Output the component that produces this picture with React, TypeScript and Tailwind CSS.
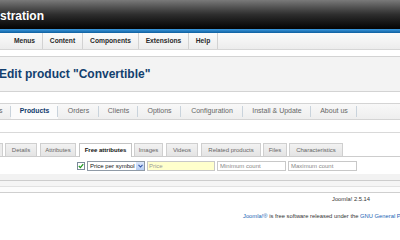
import React from "react";

const menu = [
  { t: "Menus", w: "w-[36px]" },
  { t: "Content", w: "w-[40px]" },
  { t: "Components", w: "w-[56px]" },
  { t: "Extensions", w: "w-[50px]" },
  { t: "Help", w: "w-[29px]" },
];

const sub = [
  { t: "Products", w: "w-[47px]", a: true },
  { t: "Orders", w: "w-[41px]" },
  { t: "Clients", w: "w-[39px]" },
  { t: "Options", w: "w-[43px]" },
  { t: "Configuration", w: "w-[62px]" },
  { t: "Install & Update", w: "w-[68px]" },
  { t: "About us", w: "w-[46px]" },
];

const tabs = [
  { t: "Details", c: "ml-[2px] w-[32px]" },
  { t: "Attributes", c: "ml-[3px] w-[36px]" },
  { t: "Free attributes", c: "ml-[3px] w-[53px]", a: true },
  { t: "Images", c: "ml-[2px] w-[29px]" },
  { t: "Videos", c: "ml-[3px] w-[32px]" },
  { t: "Related products", c: "ml-[3px] w-[60px]" },
  { t: "Files", c: "ml-[2px] w-[24px]" },
  { t: "Characteristics", c: "ml-[2px] w-[54px]" },
];

export default function App() {
  return (
    <div className="w-[400px] h-[240px] overflow-hidden bg-white font-['Liberation_Sans',Arial,sans-serif] flex flex-col">
      {/* header */}
      <div className="h-[29px] shrink-0 bg-gradient-to-b from-[#7a7a7a] via-[#2e2e2e] to-[#050505] flex items-center">
        <span className="text-white font-bold text-[12px] leading-none pt-[3px]">stration</span>
      </div>
      <div className="h-[4px] shrink-0 bg-gradient-to-b from-[#3c9be0] to-[#0e5f9f]" />
      {/* menu bar */}
      <div className="h-[17px] shrink-0 bg-gradient-to-b from-[#fbfbfb] to-[#ececec] border-b border-[#d6d6d6] flex items-stretch">
        <div className="w-[7px]" />
        {menu.map((m) => (
          <div
            key={m.t}
            className={`${m.w} shrink-0 border-r border-[#d2d2d2] flex items-center justify-center text-[6.7px] font-bold text-[#2a2a2a]`}
          >
            {m.t}
          </div>
        ))}
      </div>
      <div className="h-[6px] shrink-0" />
      {/* toolbar / title */}
      <div className="h-[36px] shrink-0 bg-[#f3f3f3] border-y border-[#d3d3d3] flex items-center">
        <h1 className="ml-[-1px] text-[12px] font-bold text-[#123f6e] leading-none pb-[1px]">
          Edit product "Convertible"
        </h1>
      </div>
      <div className="h-[11px] shrink-0" />
      {/* submenu */}
      <div className="h-[17px] shrink-0 bg-gradient-to-b from-[#f8f8f8] to-[#eeeeee] border-y border-[#d4d4d4] flex items-stretch text-[7px]">
        <div className="w-[11px] shrink-0 flex items-center text-[#666] relative">
          <span className="-ml-[1px]">s</span>
          <div className="absolute right-0 top-[2px] bottom-[2px] w-px bg-[#c9d3dc]" />
        </div>
        {sub.map((s) => (
          <div
            key={s.t}
            className={`${s.w} shrink-0 relative flex items-center justify-center ${
              s.a ? "font-bold text-[#0f3a6b] bg-[#fbfbfb] text-[6.8px]" : "text-[#666]"
            }`}
          >
            {s.t}
            <div className="absolute right-0 top-[2px] bottom-[2px] w-px bg-[#c9d3dc]" />
          </div>
        ))}
      </div>
      <div className="h-[12px] shrink-0" />
      {/* element box */}
      <div className="border-t border-[#d9d9d9] bg-white shrink-0">
        <div className="h-[10px]" />
        <div className="h-[14px] flex items-end border-b border-[#cdcdcd]">
          <div className="w-[4px] -ml-[1px] h-[13px] bg-[#ececec] border border-b-0 border-[#cfcfcf]" />
          {tabs.map((tb) => (
            <div
              key={tb.t}
              className={`${tb.c} shrink-0 flex items-center justify-center text-[6px] border border-b-0 ${
                tb.a
                  ? "h-[14px] -mb-[1px] bg-white border-[#c4c4c4] text-[#111] font-bold text-[5.8px]"
                  : "h-[13px] bg-gradient-to-b from-[#f2f2f2] to-[#e4e4e4] border-[#cfcfcf] text-[#666]"
              }`}
            >
              {tb.t}
            </div>
          ))}
        </div>
        {/* inputs row */}
        <div className="h-[17px] flex items-center pt-[1px] bg-white">
          <div className="ml-[77px] w-[8px] h-[8px] border border-[#7a8a99] bg-white flex items-center justify-center">
            <svg width="6" height="6" viewBox="0 0 6 6">
              <path d="M0.8 3 L2.4 4.6 L5.2 1.2" stroke="#1f9a1f" strokeWidth="1.3" fill="none" />
            </svg>
          </div>
          <div className="ml-[2px] w-[58px] h-[10px] border border-[#8f9aa6] bg-white flex items-center">
            <span className="flex-1 text-[6px] text-[#111] pl-[2px] leading-none">Price per symbol</span>
            <div className="w-[8px] h-full bg-gradient-to-b from-[#dfe9fb] to-[#b7cdf3] flex items-center justify-center">
              <svg width="5" height="4" viewBox="0 0 5 4">
                <path d="M0.5 0.8 L2.5 3 L4.5 0.8" stroke="#3457a8" strokeWidth="1.1" fill="none" />
              </svg>
            </div>
          </div>
          <div className="ml-[2px] w-[68px] h-[10px] border border-[#c8c8c8] bg-[#ffffcc] flex items-center text-[6px] text-[#999] pl-[1px] leading-none">
            Price
          </div>
          <div className="ml-[2px] w-[69px] h-[10px] border border-[#c8c8c8] bg-white flex items-center text-[6px] text-[#888] pl-[2px] leading-none">
            Minimum count
          </div>
          <div className="ml-[2px] w-[69px] h-[10px] border border-[#c8c8c8] bg-white flex items-center text-[6px] text-[#888] pl-[2px] leading-none">
            Maximum count
          </div>
        </div>
        <div className="h-[7px] bg-[#f2f2f2] border-b border-[#cdcdcd]" />
        <div className="h-[6px] bg-[#f5f5f5] border-b border-[#e2e2e2]" />
        <div className="h-[6px] bg-[#fcfcfc] border-b border-[#cfcfcf]" />
      </div>
      {/* footer */}
      <div className="pl-[332px] pt-[4px] text-[5.8px] text-[#333] leading-none whitespace-nowrap">
        Joomla! 2.5.14
      </div>
      <div className="pl-[243px] pt-[11px] text-[5.8px] text-[#333] leading-none whitespace-nowrap">
        <span className="text-[#1a5fb4]">Joomla!®</span> is free software released under the{" "}
        <span className="text-[#1a5fb4]">GNU General Public License</span>.
      </div>
    </div>
  );
}
